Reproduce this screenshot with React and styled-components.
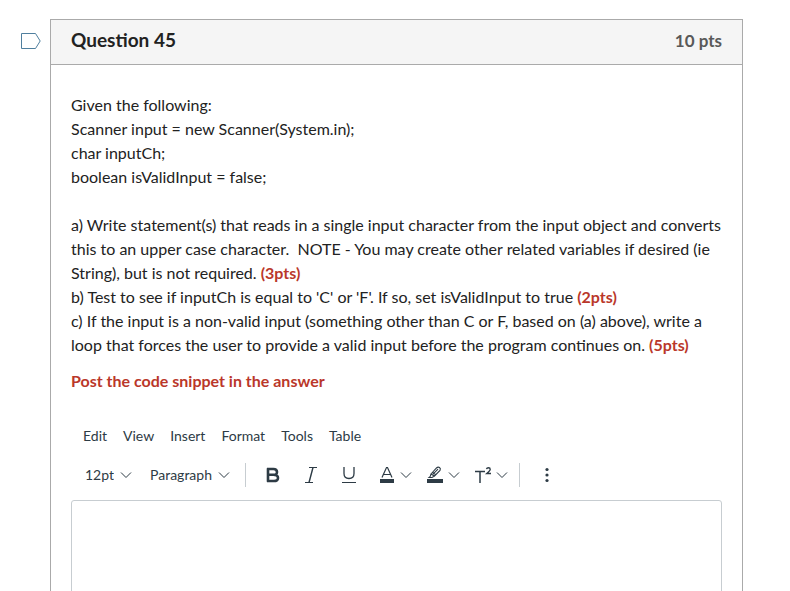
import React from "react";
import styled, { createGlobalStyle } from "styled-components";

const GlobalStyle = createGlobalStyle`
  *, *::before, *::after { box-sizing: border-box; }
  html { scrollbar-width: none; background: #fff; }
  body {
    margin: 0;
    font-family: Lato, "Open Sans", sans-serif;
    font-size: 16px;
    line-height: 24px;
    color: #222;
  }
  button, select, textarea { font: inherit; color: inherit; }
`;

const Page = styled.main`
  display: flex;
  align-items: flex-start;
  gap: 9px;
  padding: 19px 47px 20px 20px;
`;

const FlagButton = styled.button`
  display: flex;
  flex: none;
  margin-top: 13px;
  padding: 0;
  border: 0;
  background: none;
  color: #4f7f9e;
`;

const Card = styled.article`
  flex: 1;
  min-width: 0;
  border: 1px solid #aaa;
`;

const CardHeader = styled.header`
  display: flex;
  align-items: baseline;
  justify-content: space-between;
  padding: 8px 20px 11px;
  background: #f5f5f5;
  border-bottom: 1px solid #aaa;
`;

const Title = styled.h2`
  margin: 0;
  font-size: 19px;
  line-height: 24px;
  font-weight: 700;
`;

const Points = styled.span`
  font-size: 17px;
  font-weight: 700;
  color: #595959;
`;

const CardBody = styled.div`
  padding: 28px 20px 20px;
`;

const Paragraph = styled.p`
  margin: 0 0 ${(p) => (p.$spacious ? 24 : 12)}px;
`;

const Strong = styled.strong`
  font-weight: 700;
  color: #ba372a;
`;

const Editor = styled.section`
  margin-top: 28px;
  color: #2d3b45;
  font-size: 14px;
`;

const MenuBar = styled.nav`
  display: flex;
  gap: 16px;
  padding: 3px 12px;
`;

const MenuButton = styled.button`
  padding: 0;
  border: 0;
  background: none;
`;

const Toolbar = styled.div`
  display: flex;
  align-items: center;
  padding: 12px 14px 13px;
`;

const SelectWrap = styled.label`
  display: grid;
  grid-template-columns: auto 12px;
  align-items: center;
  gap: 6px;
  margin-right: ${(p) => p.$after}px;
`;

const Select = styled.select`
  appearance: none;
  field-sizing: content;
  padding: 0;
  border: 0;
  background: none;
  line-height: 24px;
`;

const Divider = styled.span`
  width: 1px;
  height: 24px;
  background: #c7cdd1;
`;

const ToolGroup = styled.div`
  display: flex;
  align-items: center;
  gap: ${(p) => p.$gap}px;
  padding: 0 ${(p) => p.$end}px 0 ${(p) => p.$start}px;
`;

const ToolButton = styled.button`
  display: flex;
  align-items: center;
  gap: 4px;
  padding: 0;
  border: 0;
  background: none;
`;

const AnswerBox = styled.textarea`
  display: block;
  width: 100%;
  height: 240px;
  padding: 10px;
  border: 1px solid #c7cdd1;
  border-radius: 3px;
  background: #fff;
  resize: none;
  outline: none;
`;

const Chevron = () => (
  <svg width="12" height="8" viewBox="0 0 12 8" fill="none" stroke="currentColor" aria-hidden="true">
    <path d="M1 1.5 6 6.5 11 1.5" />
  </svg>
);

const Icon = ({ children }) => (
  <svg width="18" height="20" viewBox="0 0 18 20" fill="none" stroke="currentColor" aria-hidden="true">
    {children}
  </svg>
);

const BoldIcon = () => (
  <Icon>
    <path d="M4 3.2V16.8M3 4H9.5Q13 4 13 7T9.5 9.8H4M9.5 9.8Q14 9.8 14 13T9.5 16H3" strokeWidth="2.6" />
  </Icon>
);

const ItalicIcon = () => (
  <Icon>
    <path d="M7 2.5H15M3 17.5H11" />
    <path d="M11 2.5 7 17.5" strokeWidth="1.4" />
  </Icon>
);

const UnderlineIcon = () => (
  <Icon>
    <path d="M4 2V8.5Q4 13.5 9 13.5T14 8.5V2" strokeWidth="1.3" />
    <path d="M2 17.5H16" />
  </Icon>
);

const TextColorIcon = () => (
  <Icon>
    <path d="M4 12.5 8.5 2.5H9.5L14 12.5M5.5 9.5H12.5" strokeWidth="1.2" />
    <path d="M2 16H16" strokeWidth="4" />
  </Icon>
);

const HighlightIcon = () => (
  <Icon>
    <path d="M5 9 10.5 3Q12 1.5 13.5 2.5T14 5.5L8.5 11ZM5 9 4.3 11.3 3 12.5H6L8.5 11M6.5 7.5 9.8 9.7M7 9.2 12 4.2" strokeWidth="1.1" />
    <path d="M1 16H17" strokeWidth="4" />
  </Icon>
);

const SuperscriptIcon = () => (
  <Icon>
    <path d="M1 6.5H11M6 6.5V18" strokeWidth="1.5" />
    <path d="M12.5 4.2Q12.8 2.8 14.5 2.8T16.2 4.5Q16.2 5.5 12.8 8.5H17" strokeWidth="1.4" />
  </Icon>
);

const MoreIcon = () => (
  <Icon>
    <g fill="currentColor" stroke="none">
      <circle cx="9" cy="4.5" r="1.6" />
      <circle cx="9" cy="10" r="1.6" />
      <circle cx="9" cy="15.5" r="1.6" />
    </g>
  </Icon>
);

const menus = ["Edit", "View", "Insert", "Format", "Tools", "Table"];

const textStyles = [
  { label: "Bold", Glyph: BoldIcon },
  { label: "Italic", Glyph: ItalicIcon },
  { label: "Underline", Glyph: UnderlineIcon },
];

const textEffects = [
  { label: "Text color", Glyph: TextColorIcon },
  { label: "Highlight color", Glyph: HighlightIcon },
  { label: "Superscript and subscript", Glyph: SuperscriptIcon },
];

function Dropdown({ label, value, after }) {
  return (
    <SelectWrap $after={after}>
      <Select aria-label={label} defaultValue={value}>
        <option>{value}</option>
      </Select>
      <Chevron />
    </SelectWrap>
  );
}

export default function App() {
  return (
    <>
      <GlobalStyle />
      <Page>
        <FlagButton type="button" aria-label="Flag question">
          <svg width="21" height="18" viewBox="0 0 21 18" fill="none" stroke="currentColor" aria-hidden="true">
            <path d="M1.5 1.5H15.5L20.2 9 15.5 16.5H1.5Z" />
          </svg>
        </FlagButton>
        <Card>
          <CardHeader>
            <Title>Question 45</Title>
            <Points>10 pts</Points>
          </CardHeader>
          <CardBody>
            <Paragraph $spacious>
              Given the following:<br />
              Scanner input = new Scanner(System.in);<br />
              char inputCh;<br />
              boolean isValidInput = false;
            </Paragraph>
            <Paragraph>
              a) Write statement(s) that reads in a single input character from the input object and converts
              this to an upper case character.&nbsp; NOTE - You may create other related variables if desired (ie
              String), but is not required. <Strong>(3pts)</Strong><br />
              b) Test to see if inputCh is equal to 'C' or 'F'. If so, set isValidInput to true <Strong>(2pts)</Strong><br />
              c) If the input is a non-valid input (something other than C or F, based on (a) above), write a
              loop that forces the user to provide a valid input before the program continues on. <Strong>(5pts)</Strong>
            </Paragraph>
            <Paragraph>
              <Strong>Post the code snippet in the answer</Strong>
            </Paragraph>
            <Editor aria-label="Answer editor">
              <MenuBar>
                {menus.map((name) => (
                  <MenuButton type="button" key={name}>{name}</MenuButton>
                ))}
              </MenuBar>
              <Toolbar>
                <Dropdown label="Font size" value="12pt" after={18} />
                <Dropdown label="Block format" value="Paragraph" after={15} />
                <Divider />
                <ToolGroup $gap={20} $start={18} $end={20}>
                  {textStyles.map(({ label, Glyph }) => (
                    <ToolButton type="button" key={label} aria-label={label}><Glyph /></ToolButton>
                  ))}
                </ToolGroup>
                <ToolGroup $gap={14} $start={0} $end={11}>
                  {textEffects.map(({ label, Glyph }) => (
                    <ToolButton type="button" key={label} aria-label={label}><Glyph /><Chevron /></ToolButton>
                  ))}
                </ToolGroup>
                <Divider />
                <ToolGroup $gap={0} $start={18} $end={0}>
                  <ToolButton type="button" aria-label="More options"><MoreIcon /></ToolButton>
                </ToolGroup>
              </Toolbar>
              <AnswerBox aria-label="Answer" />
            </Editor>
          </CardBody>
        </Card>
      </Page>
    </>
  );
}
